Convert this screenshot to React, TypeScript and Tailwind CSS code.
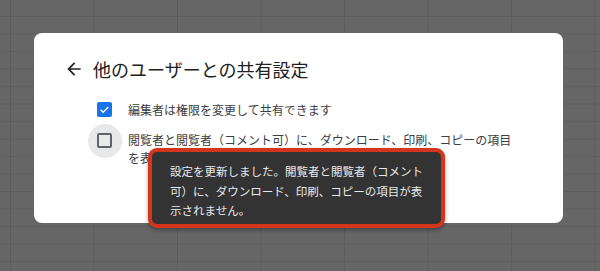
import { FC } from 'react';

const font = { fontFamily: '"Noto Sans CJK JP", "Noto Sans", sans-serif' };

const ArrowBack: FC = () => (
  <svg viewBox="0 0 24 24" className="h-[20px] w-[20px] fill-[#202124]">
    <path d="M20 11H7.83l5.59-5.59L12 4l-8 8 8 8 1.41-1.41L7.83 13H20v-2z" />
  </svg>
);

const Checked: FC = () => (
  <div className="flex h-[15px] w-[15px] items-center justify-center rounded-[2px] bg-[#1a73e8]">
    <svg viewBox="0 0 24 24" className="h-[13px] w-[13px]" fill="none" stroke="white" strokeWidth="2.6">
      <path d="M5 12.5l4.5 4.5L19 7.5" />
    </svg>
  </div>
);

export default function App() {
  return (
    <div
      className="relative h-[271px] w-[600px] overflow-hidden bg-[#666666] pl-[34px] pt-[33px]"
      style={{
        ...font,
        backgroundImage:
          'linear-gradient(to right, #5c5c5c 1px, transparent 1px), linear-gradient(to bottom, #5e5e5e 1px, transparent 1px)',
        backgroundSize: '83.5px 17.5px',
        backgroundPosition: '10px 16px',
      }}
    >
      <div className="h-[190px] w-[529px] rounded-lg bg-white pl-[30px] pt-[24px]">
        <div className="flex items-center gap-[9px]">
          <ArrowBack />
          <h1 className="text-[18px] leading-[24px] text-[#202124]">他のユーザーとの共有設定</h1>
        </div>
        <div className="mt-[20px] flex flex-col gap-[12px] pl-[33px] text-[12px] leading-[18px] text-[#3c4043]">
          <div className="flex items-start gap-[16px]">
            <div className="mt-[1px]">
              <Checked />
            </div>
            <span>編集者は権限を変更して共有できます</span>
          </div>
          <div className="flex items-start gap-[16px]">
            <div className="relative mt-[1.5px] h-[15px] w-[15px]">
              <div className="absolute left-[-9.5px] top-[-9px] h-[34px] w-[34px] rounded-full bg-[#e8e8e8]" />
              <div className="relative h-[15px] w-[15px] rounded-[2px] border-2 border-[#5f6368]" />
            </div>
            <span className="w-[390px]">
              閲覧者と閲覧者（コメント可）に、ダウンロード、印刷、コピーの項目を表示しない
            </span>
          </div>
        </div>
      </div>

      <div className="absolute left-[148px] top-[148px] h-[80px] w-[297px] rounded-[9px] border-[4px] border-[#d4361d] bg-[#333333] pl-[18px] pr-[12px] pt-[10px] text-[11.5px] leading-[19.5px] text-[#e8eaed] shadow-[0_2px_4px_rgba(0,0,0,0.35)]">
        設定を更新しました。閲覧者と閲覧者（コメント可）に、ダウンロード、印刷、コピーの項目が表示されません。
      </div>
    </div>
  );
}
